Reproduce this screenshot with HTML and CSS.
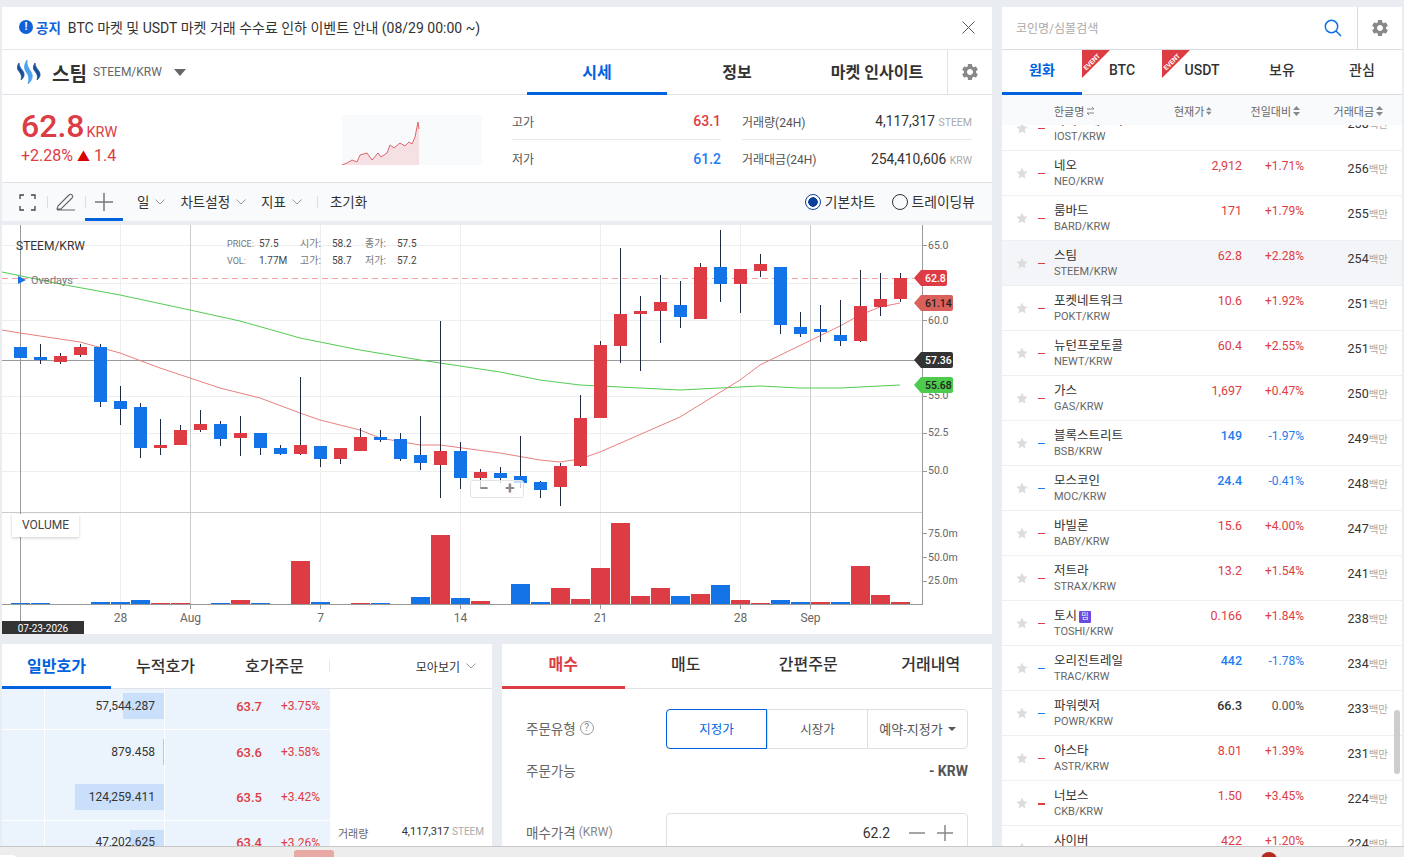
FILE: index.html
```html
<!DOCTYPE html>
<html lang="ko">
  <head>
    <meta charset="UTF-8" />
    <title>스팀 STEEM/KRW</title>
    <link rel="stylesheet" href="styles.css">
  </head>
  <body>
    <svg class="defs" width="0" height="0">
      <symbol id="gear" viewBox="0 0 24 24"><path d="M19.14 12.94c.04-.3.06-.61.06-.94 0-.32-.02-.64-.07-.94l2.03-1.58a.49.49 0 0 0 .12-.61l-1.92-3.32a.488.488 0 0 0-.59-.22l-2.39.96c-.5-.38-1.03-.7-1.62-.94l-.36-2.54a.484.484 0 0 0-.48-.41h-3.84c-.24 0-.43.17-.47.41l-.36 2.54c-.59.24-1.13.57-1.62.94l-2.39-.96c-.22-.08-.47 0-.59.22L2.74 8.87c-.12.21-.08.47.12.61l2.03 1.58c-.05.3-.09.63-.09.94s.02.64.07.94l-2.03 1.58a.49.49 0 0 0-.12.61l1.92 3.32c.12.22.37.29.59.22l2.39-.96c.5.38 1.03.7 1.62.94l.36 2.54c.05.24.24.41.48.41h3.84c.24 0 .44-.17.47-.41l.36-2.54c.59-.24 1.13-.56 1.62-.94l2.39.96c.22.08.47 0 .59-.22l1.92-3.32c.12-.22.07-.47-.12-.61l-2.01-1.58zM12 15.6c-1.98 0-3.6-1.62-3.6-3.6s1.62-3.6 3.6-3.6 3.6 1.62 3.6 3.6-1.62 3.6-3.6 3.6z"/></symbol>
      <symbol id="star" viewBox="0 0 12 12"><path d="M6 .5l1.7 3.7 4 .5-3 2.7.8 4L6 9.4l-3.500 2 .8-4-3-2.700 4-.5z"/></symbol>
      <symbol id="chev" viewBox="0 0 10 6"><path d="M.5.5L5 5 9.500.5" fill="none" stroke="#999"/></symbol>
      <symbol id="sort" viewBox="0 0 7 10"><path d="M3.500 0L7 4H0zM0 6h7l-3.500 4z"/></symbol>
      <symbol id="event" viewBox="0 0 28 28"><path d="M0 0h28L0 28z" fill="#dd3c44"/><text x="10" y="14" transform="rotate(-45 10 12)" fill="#fff" font-size="6.500" font-weight="700" text-anchor="middle">EVENT</text></symbol>
    </svg>

    <div class="layout">
      <!-- 왼쪽 영역 -->
      <main class="main">
        <section class="panel">
          <div class="notice">
            <span class="notice-icon">!</span>
            <strong>공지</strong>
            <span class="notice-text">BTC 마켓 및 USDT 마켓 거래 수수료 인하 이벤트 안내 (08/29 00:00 ~)</span>
            <svg class="notice-close" width="13" height="13" viewBox="0 0 13 13"><path d="M.5.5l12 12M12.500.5l-12 12" stroke="#555" fill="none"/></svg>
          </div>

          <div class="coin-head">
            <svg class="coin-logo" width="24" height="24" viewBox="0 0 24 24">
              <path fill="#1a5099" stroke="#1a5099" stroke-width=".8" d="M2 3C-.5 7 0 9 2.500 12 4.500 14.500 5 17 4 20c3.500-3 4-6 1.500-9.500C3.500 8 2 6 2 3z"/>
              <path fill="#4ba2f2" stroke="#4ba2f2" stroke-width=".8" d="M10 0C6.500 6 7 9 10 13c2 3 2.500 7 1 11 4.500-4 5.500-8.500 2.500-13C11 7.500 9.500 4.500 10 0z"/>
              <path fill="#1a5099" stroke="#1a5099" stroke-width=".8" d="M18 3c-2.500 4-2 6 .5 9 2 2.500 2.500 5 1.500 8 3.500-3 4-6 1.500-9.500C19.500 8 18 6 18 3z"/>
            </svg>
            <strong class="coin-title">스팀</strong>
            <span class="coin-pair">STEEM/KRW</span>
            <span class="caret"></span>
            <nav class="head-tabs">
              <a class="head-tab active">시세</a>
              <a class="head-tab">정보</a>
              <a class="head-tab">마켓 인사이트</a>
            </nav>
            <div class="head-gear"><svg width="20" height="20"><use href="#gear"/></svg></div>
          </div>

          <div class="summary">
            <div class="summary-price">
              <div class="price-now">62.8<small>KRW</small></div>
              <div class="price-diff">+2.28% <i class="up-arrow">▲</i> 1.4</div>
            </div>
            <svg class="spark" width="140" height="50" viewBox="342 115 140 50">
              <path fill="#f5e1e3" d="M342 165l5-2 5-3 5 2 3-7 7-2 5 7 6-7 3 4 6-4 3-8 4 3 6-5 5 3 4-4 3 2 3-7 3-15 1 7v36z"/>
              <path fill="none" stroke="#e0636b" d="M342 165l5-2 5-3 5 2 3-7 7-2 5 7 6-7 3 4 6-4 3-8 4 3 6-5 5 3 4-4 3 2 3-7 3-15 1 7"/>
            </svg>
            <div class="stats">
              <div class="stat"><span>고가</span><b class="up">63.1</b></div>
              <div class="stat"><span>거래량(24H)</span><em>4,117,317 <small>STEEM</small></em></div>
              <div class="stat"><span>저가</span><b class="down">61.2</b></div>
              <div class="stat"><span>거래대금(24H)</span><em>254,410,606 <small>KRW</small></em></div>
            </div>
          </div>

          <div class="toolbar">
            <button class="tool">
              <svg width="17" height="17" viewBox="0 0 17 17"><path d="M1 5V1h4M12 1h4v4M16 12v4h-4M5 16H1v-4" fill="none" stroke="#444" stroke-width="1.300"/></svg>
            </button>
            <button class="tool">
              <svg width="20" height="18" viewBox="0 0 20 18"><path d="M2 13L13 2c1-1 2-1 3 0s1 2 0 3L5 16H1zM1 17h18" fill="none" stroke="#666" stroke-width="1.100"/></svg>
            </button>
            <button class="tool active">
              <svg width="18" height="18" viewBox="0 0 18 18"><path d="M9 0v18M0 9h18" stroke="#777" stroke-width="1.500"/></svg>
            </button>
            <button class="menu first">일<svg width="10" height="6"><use href="#chev"/></svg></button>
            <button class="menu">차트설정<svg width="10" height="6"><use href="#chev"/></svg></button>
            <button class="menu">지표<svg width="10" height="6"><use href="#chev"/></svg></button>
            <span class="tool-sep"></span>
            <button class="menu">초기화</button>
            <label class="radio on"><i></i>기본차트</label>
            <label class="radio"><i></i>트레이딩뷰</label>
          </div>
        </section>

        <!-- 차트 -->
        <section class="panel chart-panel">
          <svg class="chart" width="990" height="409" viewBox="2 225 990 409">
            <path class="grid" d="M2 245.500h920M2 283.500h920M2 320.500h920M2 396.500h920M2 433.500h920M2 471.500h920M120.500 225v379M320.500 225v379M460.500 225v379M600.500 225v379M740.500 225v379"/>
            <path class="grid-dark" d="M190.500 225v379M810.500 225v379M2 512.500h920"/>
            <path class="axis" d="M922.500 225v380M2 604.500h921M922 245.500h5M922 320.500h5M922 396.500h5M922 433.500h5M922 471.500h5M922 533.500h5M922 557.500h5M922 581.500h5M120.500 604v5M190.500 604v5M320.500 604v5M460.500 604v5M600.500 604v5M740.500 604v5M810.500 604v5"/>
            <path class="cross" d="M20.500 225v396M2 360.500h920"/>
            <path class="last-line" d="M2 278.500h912"/>

            <path class="ma-green" d="M2 272L60 284 120 295 190 310 240 321 300 338 360 350 420 360 500 372 540 380 580 385 680 390 760 386 800 388 840 388 900 385"/>
            <path class="ma-red" d="M2 330L20 333 80 342 120 353 160 368 220 388 260 398 300 413 320 420 360 430 380 438 420 445 440 445 500 453 540 460 560 462 580 459 600 452 680 417 740 380 760 365 840 326 860 315 880 307 900 303"/>

            <path class="wick" d="M40.500 344v20M60.500 353v11M80.500 344v13M100.500 344v63M120.500 386v39M140.500 403v55M160.500 419v36M180.500 425v20M200.500 410v22M220.500 421v25M240.500 416v40M260.500 433v22M280.500 445v10M300.500 377v78M320.500 446v21M340.500 448v16M360.500 428v23M380.500 430v12M400.500 433v28M420.500 416v54M440.500 321v177M460.500 442v47M480.500 469v19M500.500 467v16M520.500 436v52M540.500 481v17M560.500 463v43M580.500 395v72M600.500 341v77M620.500 248v115M640.500 296v75M660.500 275v68M680.500 281v47M700.500 263v56M720.500 230v72M740.500 269v44M760.500 254v23M780.500 267v67M800.500 312v25M820.500 305v37M840.500 300v46M860.500 270v72M880.500 273v43M900.500 273v29"/>

            <g class="candle-blue">
              <rect x="14" y="347" width="13" height="11"/><rect x="34" y="357" width="13" height="3"/><rect x="94" y="347" width="13" height="55"/><rect x="114" y="401" width="13" height="8"/><rect x="134" y="407" width="13" height="41"/><rect x="214" y="424" width="13" height="15"/><rect x="254" y="433" width="13" height="15"/><rect x="274" y="448" width="13" height="6"/><rect x="314" y="446" width="13" height="13"/><rect x="374" y="437" width="13" height="3"/><rect x="394" y="439" width="13" height="20"/><rect x="414" y="455" width="13" height="8"/><rect x="454" y="451" width="13" height="27"/><rect x="494" y="473" width="13" height="5"/><rect x="514" y="476" width="13" height="7"/><rect x="534" y="482" width="13" height="8"/><rect x="674" y="305" width="13" height="12"/><rect x="714" y="267" width="13" height="17"/><rect x="774" y="267" width="13" height="58"/><rect x="794" y="327" width="13" height="7"/><rect x="814" y="329" width="13" height="3"/><rect x="834" y="335" width="13" height="6"/>
            </g>
            <g class="candle-red">
              <rect x="54" y="356" width="13" height="6"/><rect x="74" y="347" width="13" height="8"/><rect x="154" y="445" width="13" height="3"/><rect x="174" y="430" width="13" height="15"/><rect x="194" y="424" width="13" height="6"/><rect x="234" y="433" width="13" height="5"/><rect x="294" y="445" width="13" height="9"/><rect x="334" y="448" width="13" height="11"/><rect x="354" y="437" width="13" height="14"/><rect x="434" y="451" width="13" height="14"/><rect x="474" y="472" width="13" height="6"/><rect x="554" y="466" width="13" height="21"/><rect x="574" y="418" width="13" height="48"/><rect x="594" y="345" width="13" height="73"/><rect x="614" y="314" width="13" height="32"/><rect x="634" y="311" width="13" height="3"/><rect x="654" y="302" width="13" height="9"/><rect x="694" y="267" width="13" height="52"/><rect x="734" y="269" width="13" height="15"/><rect x="754" y="264" width="13" height="7"/><rect x="854" y="306" width="13" height="35"/><rect x="874" y="299" width="13" height="8"/><rect x="894" y="278" width="13" height="21"/>
            </g>

            <!-- 거래량 -->
            <g class="candle-blue">
              <rect x="11" y="603" width="19" height="1"/><rect x="31" y="603" width="19" height="1"/><rect x="91" y="602" width="19" height="2"/><rect x="111" y="602" width="19" height="2"/><rect x="131" y="600" width="19" height="4"/><rect x="211" y="603" width="19" height="1"/><rect x="251" y="603" width="19" height="1"/><rect x="311" y="602" width="19" height="2"/><rect x="371" y="603" width="19" height="1"/><rect x="411" y="597" width="19" height="7"/><rect x="451" y="598" width="19" height="6"/><rect x="511" y="584" width="19" height="20"/><rect x="531" y="602" width="19" height="2"/><rect x="671" y="596" width="19" height="8"/><rect x="711" y="585" width="19" height="19"/><rect x="771" y="600" width="19" height="4"/><rect x="791" y="602" width="19" height="2"/><rect x="831" y="602" width="19" height="2"/>
            </g>
            <g class="candle-red">
              <rect x="151" y="603" width="19" height="1"/><rect x="171" y="603" width="19" height="1"/><rect x="231" y="600" width="19" height="4"/><rect x="291" y="561" width="19" height="43"/><rect x="351" y="603" width="19" height="1"/><rect x="431" y="535" width="19" height="69"/><rect x="471" y="601" width="19" height="3"/><rect x="551" y="588" width="19" height="16"/><rect x="571" y="599" width="19" height="5"/><rect x="591" y="568" width="19" height="36"/><rect x="611" y="523" width="19" height="81"/><rect x="631" y="596" width="19" height="8"/><rect x="651" y="588" width="19" height="16"/><rect x="691" y="594" width="19" height="10"/><rect x="731" y="600" width="19" height="4"/><rect x="751" y="603" width="19" height="1"/><rect x="811" y="602" width="19" height="2"/><rect x="851" y="566" width="19" height="38"/><rect x="871" y="595" width="19" height="9"/><rect x="891" y="602" width="19" height="2"/>
            </g>

            <text class="t-pair" x="16" y="250">STEEM/KRW</text>
            <g class="t-label">
              <text x="227" y="247">PRICE:</text><text x="227" y="264">VOL:</text>
              <text class="hangul" x="300" y="247">시가:</text><text class="hangul" x="300" y="264">고가:</text>
              <text class="hangul" x="365" y="247">종가:</text><text class="hangul" x="365" y="264">저가:</text>
            </g>
            <g class="t-value">
              <text x="259" y="247">57.5</text><text x="259" y="264">1.77M</text>
              <text x="332" y="247">58.2</text><text x="332" y="264">58.7</text>
              <text x="397" y="247">57.5</text><text x="397" y="264">57.2</text>
            </g>
            <path fill="#1473e6" d="M18 276l8 4-8 4z"/>
            <text class="t-over" x="31" y="284">Overlays</text>

            <g class="t-axis">
              <text x="928" y="249">65.0</text><text x="928" y="324">60.0</text><text x="928" y="399">55.0</text><text x="928" y="436">52.5</text><text x="928" y="474">50.0</text>
              <text x="928" y="537">75.0m</text><text x="928" y="561">50.0m</text><text x="928" y="584">25.0m</text>
            </g>
            <g class="t-date">
              <text x="120.500" y="622">28</text><text x="190.500" y="622">Aug</text><text x="320.500" y="622">7</text><text x="460.500" y="622">14</text><text x="600.500" y="622">21</text><text x="740.500" y="622">28</text><text x="810.500" y="622">Sep</text>
            </g>

            <path fill="#dd3c44" d="M914 278l7-8h24a2 2 0 0 1 2 2v12a2 2 0 0 1-2 2h-24z"/>
            <path fill="#d9605b" d="M914 303l7-8h30a2 2 0 0 1 2 2v12a2 2 0 0 1-2 2h-30z"/>
            <path fill="#333" d="M914 360l7-8h30a2 2 0 0 1 2 2v12a2 2 0 0 1-2 2h-30z"/>
            <path fill="#4ccb4c" d="M914 385l7-8h30a2 2 0 0 1 2 2v12a2 2 0 0 1-2 2h-30z"/>
            <g class="t-tag">
              <text x="925" y="282" fill="#fff">62.8</text><text x="925" y="307" fill="#222">61.14</text><text x="925" y="364" fill="#fff">57.36</text><text x="925" y="389" fill="#222">55.68</text>
            </g>

            <rect x="2" y="621" width="82" height="13" fill="#333"/>
            <text class="t-badge" x="43" y="632">07-23-2026</text>
          </svg>

          <div class="vol-label">VOLUME</div>
          <div class="zoom-box"><span>−</span><span>+</span></div>
        </section>

        <div class="bottom">
          <!-- 호가 -->
          <section class="panel book">
            <div class="book-tabs">
              <a class="book-tab active">일반호가</a>
              <a class="book-tab">누적호가</a>
              <a class="book-tab">호가주문</a>
              <span class="book-group">모아보기<svg width="10" height="6"><use href="#chev"/></svg></span>
            </div>
            <div class="book-body">
              <div class="book-rows">
                <div class="book-row">
                  <div class="cell"></div>
                  <div class="cell qty"><i style="width:41px"></i><span>57,544.287</span></div>
                  <div class="cell quote"><b>63.7</b><span>+3.75%</span></div>
                </div>
                <div class="book-row no-line">
                  <div class="cell"></div>
                  <div class="cell qty"><i class="tiny" style="width:1px"></i><span>879.458</span></div>
                  <div class="cell quote"><b>63.6</b><span>+3.58%</span></div>
                </div>
                <div class="book-row">
                  <div class="cell"></div>
                  <div class="cell qty"><i style="width:89px"></i><span>124,259.411</span></div>
                  <div class="cell quote"><b>63.5</b><span>+3.42%</span></div>
                </div>
                <div class="book-row">
                  <div class="cell"></div>
                  <div class="cell qty"><i style="width:34px"></i><span>47,202.625</span></div>
                  <div class="cell quote"><b>63.4</b><span>+3.26%</span></div>
                </div>
              </div>
              <div class="book-side">
                <span>거래량</span>
                <em>4,117,317 <small>STEEM</small></em>
              </div>
            </div>
          </section>

          <!-- 주문 -->
          <section class="panel order">
            <div class="order-tabs">
              <a class="order-tab active">매수</a>
              <a class="order-tab">매도</a>
              <a class="order-tab">간편주문</a>
              <a class="order-tab">거래내역</a>
            </div>
            <div class="order-form">
              <div class="form-row">
                <span class="form-label">주문유형<i class="help">?</i></span>
                <div class="segment">
                  <a class="seg active">지정가</a>
                  <a class="seg">시장가</a>
                  <a class="seg seg-drop">예약-지정가<i></i></a>
                </div>
              </div>
              <div class="form-row can-order">
                <span class="form-label">주문가능</span>
                <b>- KRW</b>
              </div>
              <div class="form-row price-row">
                <span class="form-label">매수가격 <small>(KRW)</small></span>
                <div class="price-input">
                  <span>62.2</span>
                  <svg width="16" height="16" viewBox="0 0 16 16"><path d="M0 8h16" stroke="#888" stroke-width="1.500"/></svg>
                  <svg width="16" height="16" viewBox="0 0 16 16"><path d="M0 8h16M8 0v16" stroke="#888" stroke-width="1.500"/></svg>
                </div>
              </div>
            </div>
          </section>
        </div>
      </main>

      <!-- 오른쪽 코인 목록 -->
      <aside class="panel market">
        <div class="search">
          <span class="search-text">코인명/심볼검색</span>
          <svg class="search-icon" width="18" height="18" viewBox="0 0 18 18"><circle cx="7.500" cy="7.500" r="6.200" fill="none" stroke="#0f6fe0" stroke-width="1.500"/><path d="M12 12l5 5" stroke="#0f6fe0" stroke-width="1.500"/></svg>
          <div class="search-gear"><svg width="20" height="20"><use href="#gear"/></svg></div>
        </div>
        <div class="market-tabs">
          <a class="market-tab active">원화</a>
          <a class="market-tab"><svg class="event" width="28" height="28"><use href="#event"/></svg>BTC</a>
          <a class="market-tab"><svg class="event" width="28" height="28"><use href="#event"/></svg>USDT</a>
          <a class="market-tab">보유</a>
          <a class="market-tab">관심</a>
        </div>
        <div class="coin-cols">
          <span class="col-name">한글명<svg width="9" height="10" viewBox="0 0 9 10"><path d="M1 3h7L6 1M8 7H1l2 2" fill="none" stroke="#888"/></svg></span>
          <span class="col-price">현재가<svg width="7" height="10"><use href="#sort"/></svg></span>
          <span class="col-rate">전일대비<svg width="7" height="10"><use href="#sort"/></svg></span>
          <span class="col-vol">거래대금<svg width="7" height="10"><use href="#sort"/></svg></span>
        </div>
        <div class="coin-list">
          <ul>
            <li class="coin"><svg class="star"><use href="#star"/></svg><i class="trend up-bg"></i><div class="name"><b>아이오에스티</b><span>IOST/KRW</span></div><span class="price up">3.847</span><span class="rate up">+2.17%</span><span class="vol">258<small>백만</small></span></li>
            <li class="coin"><svg class="star"><use href="#star"/></svg><i class="trend up-bg"></i><div class="name"><b>네오</b><span>NEO/KRW</span></div><span class="price up">2,912</span><span class="rate up">+1.71%</span><span class="vol">256<small>백만</small></span></li>
            <li class="coin"><svg class="star"><use href="#star"/></svg><i class="trend up-bg"></i><div class="name"><b>룸바드</b><span>BARD/KRW</span></div><span class="price up">171</span><span class="rate up">+1.79%</span><span class="vol">255<small>백만</small></span></li>
            <li class="coin current"><svg class="star"><use href="#star"/></svg><i class="trend up-bg"></i><div class="name"><b>스팀</b><span>STEEM/KRW</span></div><span class="price up">62.8</span><span class="rate up">+2.28%</span><span class="vol">254<small>백만</small></span></li>
            <li class="coin"><svg class="star"><use href="#star"/></svg><i class="trend up-bg"></i><div class="name"><b>포켓네트워크</b><span>POKT/KRW</span></div><span class="price up">10.6</span><span class="rate up">+1.92%</span><span class="vol">251<small>백만</small></span></li>
            <li class="coin"><svg class="star"><use href="#star"/></svg><i class="trend up-bg"></i><div class="name"><b>뉴턴프로토콜</b><span>NEWT/KRW</span></div><span class="price up">60.4</span><span class="rate up">+2.55%</span><span class="vol">251<small>백만</small></span></li>
            <li class="coin"><svg class="star"><use href="#star"/></svg><i class="trend up-bg"></i><div class="name"><b>가스</b><span>GAS/KRW</span></div><span class="price up">1,697</span><span class="rate up">+0.47%</span><span class="vol">250<small>백만</small></span></li>
            <li class="coin"><svg class="star"><use href="#star"/></svg><i class="trend down-bg"></i><div class="name"><b>블록스트리트</b><span>BSB/KRW</span></div><span class="price down">149</span><span class="rate down">-1.97%</span><span class="vol">249<small>백만</small></span></li>
            <li class="coin"><svg class="star"><use href="#star"/></svg><i class="trend down-bg"></i><div class="name"><b>모스코인</b><span>MOC/KRW</span></div><span class="price down">24.4</span><span class="rate down">-0.41%</span><span class="vol">248<small>백만</small></span></li>
            <li class="coin"><svg class="star"><use href="#star"/></svg><i class="trend up-bg"></i><div class="name"><b>바빌론</b><span>BABY/KRW</span></div><span class="price up">15.6</span><span class="rate up">+4.00%</span><span class="vol">247<small>백만</small></span></li>
            <li class="coin"><svg class="star"><use href="#star"/></svg><i class="trend up-bg"></i><div class="name"><b>저트라</b><span>STRAX/KRW</span></div><span class="price up">13.2</span><span class="rate up">+1.54%</span><span class="vol">241<small>백만</small></span></li>
            <li class="coin"><svg class="star"><use href="#star"/></svg><i class="trend up-bg"></i><div class="name"><b>토시<em class="meme">밈</em></b><span>TOSHI/KRW</span></div><span class="price up">0.166</span><span class="rate up">+1.84%</span><span class="vol">238<small>백만</small></span></li>
            <li class="coin"><svg class="star"><use href="#star"/></svg><i class="trend down-bg"></i><div class="name"><b>오리진트레일</b><span>TRAC/KRW</span></div><span class="price down">442</span><span class="rate down">-1.78%</span><span class="vol">234<small>백만</small></span></li>
            <li class="coin"><svg class="star"><use href="#star"/></svg><i class="trend down-bg"></i><div class="name"><b>파워렛저</b><span>POWR/KRW</span></div><span class="price">66.3</span><span class="rate flat">0.00%</span><span class="vol">233<small>백만</small></span></li>
            <li class="coin"><svg class="star"><use href="#star"/></svg><i class="trend up-bg"></i><div class="name"><b>아스타</b><span>ASTR/KRW</span></div><span class="price up">8.01</span><span class="rate up">+1.39%</span><span class="vol">231<small>백만</small></span></li>
            <li class="coin"><svg class="star"><use href="#star"/></svg><i class="trend up-bg thick"></i><div class="name"><b>너보스</b><span>CKB/KRW</span></div><span class="price up">1.50</span><span class="rate up">+3.45%</span><span class="vol">224<small>백만</small></span></li>
            <li class="coin"><svg class="star"><use href="#star"/></svg><i class="trend up-bg"></i><div class="name"><b>사이버</b><span>CYBER/KRW</span></div><span class="price up">422</span><span class="rate up">+1.20%</span><span class="vol">224<small>백만</small></span></li>
          </ul>
          <div class="scroll-thumb"></div>
        </div>
      </aside>
    </div>

    <!-- 하단 브라우저 바 -->
    <div class="dock">
      <span class="dock-tab"></span>
      <span class="dock-pink"></span>
      <span class="dock-dot"></span>
    </div>
  </body>
</html>
```

FILE: styles.css
```css
* {
  box-sizing: border-box;
}

html,
body {
  margin: 0;
  height: 857px;
  overflow: hidden;
}

body {
  position: relative;
  background: #e9ecf1;
  color: #333;
  font-family: Roboto, "Noto Sans CJK KR", sans-serif;
  font-size: 13px;
}

button {
  font: inherit;
  color: inherit;
  background: none;
  border: none;
  padding: 0;
}

ul {
  list-style: none;
  margin: 0;
  padding: 0;
}

em,
i {
  font-style: normal;
}

.defs {
  position: absolute;
}

.up {
  color: #dd3c44;
}

.down {
  color: #1e7df0;
}

.panel {
  background: #fff;
}

.layout {
  display: grid;
  grid-template-columns: 990px 400px;
  column-gap: 10px;
  padding: 7px 0 0 2px;
  height: 857px;
}

.main {
  display: flex;
  flex-direction: column;
  min-width: 0;
}

/* 공지 */
.notice {
  display: flex;
  align-items: center;
  height: 43px;
  padding: 0 17px 2px;
  border-bottom: 1px solid #e6e8ec;
}

.notice-icon {
  width: 14px;
  height: 14px;
  border-radius: 50%;
  background: #0f62d9;
  color: #fff;
  font-size: 11px;
  font-weight: 700;
  line-height: 14px;
  text-align: center;
}

.notice strong {
  margin-left: 3px;
  color: #0f62d9;
  font-size: 13.5px;
}

.notice-text {
  margin-left: 7px;
  font-size: 14px;
  color: #333;
}

.notice-close {
  margin-left: auto;
}

/* 코인 헤더 */
.coin-head {
  display: flex;
  align-items: center;
  height: 45px;
  padding-left: 15px;
  border-bottom: 1px solid #dfe2e7;
}

.coin-title {
  margin-left: 11px;
  font-size: 19px;
  color: #333;
}

.coin-pair {
  margin-left: 6px;
  font-size: 12px;
  color: #666;
}

.caret {
  margin-left: 12px;
  border-left: 6.5px solid transparent;
  border-right: 6.5px solid transparent;
  border-top: 7px solid #666;
}

.head-tabs {
  display: flex;
  margin-left: auto;
  height: 100%;
}

.head-tab {
  width: 140px;
  height: 45px;
  font-size: 16px;
  font-weight: 700;
  line-height: 45px;
  text-align: center;
  border-bottom: 3px solid transparent;
}

.head-tab.active {
  color: #0062df;
  border-bottom-color: #0062df;
}

.head-gear {
  display: flex;
  align-items: center;
  justify-content: center;
  width: 45px;
  height: 100%;
  border-left: 1px solid #dfe2e7;
  fill: #888;
}

/* 시세 요약 */
.summary {
  display: flex;
  height: 88px;
  border-bottom: 1px solid #dfe2e7;
}

.summary-price {
  width: 340px;
  padding: 9px 0 0 19px;
  color: #dd3c44;
}

.price-now {
  height: 42px;
  font-size: 32px;
  font-weight: 500;
  line-height: 44px;
}

.price-now small {
  margin-left: 2px;
  font-size: 14.5px;
  font-weight: 400;
}

.price-diff {
  font-size: 16px;
  line-height: 20px;
}

.up-arrow {
  color: #d90000;
  font-size: 13px;
}

.spark {
  margin-top: 20px;
  background: #f9fafc;
}

.stats {
  display: grid;
  grid-template-columns: 209px 230px;
  grid-auto-rows: 37px;
  column-gap: 21px;
  margin: 8px 0 0 30px;
}

.stat {
  display: flex;
  align-items: center;
  justify-content: space-between;
  font-size: 12px;
  color: #555;
}

.stat:nth-child(-n+2) {
  border-bottom: 1px solid #e6e8ec;
}

.stat b {
  font-size: 14px;
  font-weight: 500;
}

.stat em {
  font-size: 13.8px;
  color: #333;
}

.stat small {
  font-size: 10.5px;
  color: #aaa;
}

.book-side small {
  font-size: 10px;
  color: #aaa;
}

/* 차트 툴바 */
.toolbar {
  display: flex;
  align-items: center;
  height: 38px;
  background: #f9fafc;
  padding-left: 5px;
  padding-right: 17px;
}

.tool {
  position: relative;
  display: flex;
  align-items: center;
  justify-content: center;
  width: 38px;
  height: 38px;
}

.tool + .tool::before {
  content: "";
  position: absolute;
  left: 0;
  top: 13px;
  height: 12px;
  border-left: 1px solid #ddd;
}

.tool:first-child {
  width: 40px;
}

.tool.active {
  border-bottom: 3px solid #0062df;
  padding-top: 3px;
}

.menu {
  display: flex;
  align-items: center;
  gap: 6px;
  margin-right: 15px;
  padding-bottom: 2px;
  font-size: 13.5px;
  color: #333;
}

.menu svg {
  margin-top: 2px;
}

.menu.first {
  margin-left: 14px;
}

.tool-sep {
  height: 12px;
  margin-right: 12px;
  border-left: 1px solid #ddd;
}

.radio {
  display: flex;
  align-items: center;
  gap: 4px;
  margin-left: 16px;
  padding-bottom: 2px;
  font-size: 13.8px;
}

.radio:nth-last-child(2) {
  margin-left: auto;
}

.radio i {
  width: 16px;
  height: 16px;
  margin-top: 2px;
  border-radius: 50%;
  border: 1.5px solid #333;
}

.radio.on i {
  border-color: #0a3f9e;
  background: radial-gradient(circle, #0a3f9e 0 4.5px, #fff 5px);
}

/* 차트 */
.chart-panel {
  position: relative;
  height: 409px;
  margin-top: 4px;
}

.chart {
  display: block;
}

.grid,
.grid-dark,
.axis,
.cross,
.last-line,
.ma-green,
.ma-red,
.wick {
  fill: none;
}

.grid {
  stroke: #eeeeee;
}

.grid-dark {
  stroke: #cccccc;
}

.axis {
  stroke: #999;
}

.cross {
  stroke: #999;
}

.last-line {
  stroke: #f2a0a4;
  stroke-dasharray: 6 4;
}

.ma-green {
  stroke: #52cc52;
}

.ma-red {
  stroke: #e8807f;
}

.wick {
  stroke: #1c2b3f;
}

.candle-blue {
  fill: #1473e6;
}

.candle-red {
  fill: #dd3c44;
}

.chart text {
  font-size: 10px;
}

.chart .t-pair {
  font-size: 12px;
  fill: #333;
}

.t-label text {
  fill: #777;
  font-size: 9px;
}

.chart .t-label .hangul {
  font-size: 10px;
}

.t-value text {
  fill: #444;
}

.chart .t-over {
  font-size: 11px;
  fill: #777;
}

.t-axis text {
  fill: #666;
  font-size: 10.5px;
}

.t-date text {
  fill: #666;
  font-size: 12px;
  text-anchor: middle;
}

.t-tag text {
  font-size: 10.5px;
  font-weight: 500;
}

.chart .t-badge {
  fill: #fff;
  font-size: 10px;
  text-anchor: middle;
}

.vol-label {
  position: absolute;
  left: 10px;
  top: 289px;
  width: 67px;
  height: 23px;
  background: #fff;
  box-shadow: 0 1px 3px rgba(0, 0, 0, 0.2);
  font-size: 12px;
  line-height: 23px;
  text-align: center;
  color: #444;
}

.zoom-box {
  position: absolute;
  left: 468px;
  top: 255px;
  display: flex;
  width: 54px;
  height: 18px;
  border: 1px solid #e3e3e3;
  border-radius: 3px;
  background: rgba(255, 255, 255, 0.75);
  color: #888;
  font-size: 17px;
  font-weight: 700;
  line-height: 15px;
}

.zoom-box span {
  flex: 1;
  text-align: center;
}

/* 하단 */
.bottom {
  display: flex;
  gap: 10px;
  margin-top: 10px;
  flex: 1;
  min-height: 0;
}

.bottom .panel {
  width: 490px;
  overflow: hidden;
}

.book-tabs {
  display: flex;
  align-items: center;
  height: 45px;
  border-bottom: 1px solid #dfe2e7;
}

.book-tab {
  width: 109px;
  height: 45px;
  font-size: 16px;
  font-weight: 500;
  line-height: 45px;
  text-align: center;
  border-bottom: 3px solid transparent;
}

.book-tab.active {
  color: #0062df;
  font-weight: 700;
  border-bottom-color: #0062df;
}

.book-group {
  display: flex;
  align-items: center;
  justify-content: flex-end;
  gap: 6px;
  flex: 1;
  height: 12px;
  padding-right: 16px;
  border-left: 1px solid #e6e8ec;
  font-size: 12px;
}

.book-body {
  display: flex;
  height: 168px;
  overflow: hidden;
}

.book-rows {
  width: 328px;
  flex: none;
}

.book-row {
  display: grid;
  grid-template-columns: 42px 119px 165px;
  column-gap: 1px;
  height: 45.5px;
  padding-bottom: 1px;
  width: 328px;
}

.book-row:first-child {
  margin-top: -5px;
}

.book-row.no-line {
  padding-bottom: 0;
}

.cell {
  position: relative;
  display: flex;
  align-items: center;
  background: #ebf3fd;
}

.qty {
  justify-content: flex-end;
  padding-right: 9px;
  padding-bottom: 1px;
  font-size: 12px;
}

.qty i {
  position: absolute;
  right: 0;
  top: 9px;
  height: 26px;
  background: #c9dffa;
}

.qty i.tiny {
  background: #b9c6d6;
}

.qty span {
  position: relative;
}

.quote {
  color: #dd3c44;
}

.quote b {
  width: 97px;
  font-size: 13px;
  font-weight: 500;
  text-align: right;
}

.quote span {
  width: 58px;
  font-size: 12px;
  text-align: right;
}

.book-side {
  display: flex;
  justify-content: space-between;
  flex: 1;
  height: 16px;
  margin-top: 136px;
  padding: 0 8px;
  font-size: 11px;
  color: #666;
}

.book-side em {
  color: #333;
  font-size: 11px;
}

.order-tabs {
  display: flex;
  height: 45px;
  border-bottom: 1px solid #dfe2e7;
}

.order-tab {
  flex: 1;
  height: 45px;
  font-size: 16px;
  font-weight: 500;
  line-height: 42px;
  text-align: center;
  border-bottom: 3px solid transparent;
}

.order-tab.active {
  color: #dd3c44;
  font-weight: 700;
  border-bottom-color: #dd3c44;
}

.order-form {
  padding: 20px 24px 0;
}

.form-row {
  display: flex;
  align-items: center;
  justify-content: space-between;
}

.form-label {
  display: flex;
  align-items: center;
  gap: 3px;
  padding-bottom: 2px;
  font-size: 13.5px;
  color: #666;
}

.form-label small {
  font-size: 12px;
  color: #888;
}

.help {
  display: inline-block;
  width: 14px;
  height: 14px;
  margin-left: 1px;
  border: 1px solid #999;
  border-radius: 50%;
  color: #888;
  font-size: 10px;
  line-height: 12px;
  text-align: center;
}

.segment {
  display: flex;
  width: 302px;
  height: 40px;
  border: 1px solid #dcdfe4;
  border-radius: 4px;
  font-size: 12.5px;
  color: #555;
}

.seg {
  display: flex;
  align-items: center;
  justify-content: center;
  width: 100px;
  padding-bottom: 1px;
  border-left: 1px solid #dcdfe4;
}

.seg.active {
  margin: -1px 0 -1px -1px;
  width: 101px;
  border: 1px solid #0062df;
  border-radius: 4px 0 0 4px;
  color: #0062df;
}

.seg-drop {
  flex: 1;
  gap: 5px;
  font-size: 13px;
}

.seg-drop i {
  border-left: 4px solid transparent;
  border-right: 4px solid transparent;
  border-top: 4px solid #555;
}

.can-order {
  margin-top: 12px;
  height: 20px;
}

.can-order b {
  font-size: 14px;
  color: #555;
}

.price-row {
  margin-top: 32px;
}

.price-input {
  display: flex;
  align-items: center;
  gap: 12px;
  width: 302px;
  height: 40px;
  padding-right: 14px;
  border: 1px solid #dcdfe4;
  border-radius: 4px;
  font-size: 14px;
}

.price-input span {
  margin-left: auto;
  margin-right: 7px;
}

/* 코인 목록 */
.market {
  display: flex;
  flex-direction: column;
  height: 850px;
}

.search {
  display: flex;
  align-items: center;
  flex: none;
  height: 43px;
  padding-left: 14px;
  border-bottom: 1px solid #d9dce1;
}

.search-text {
  flex: 1;
  padding-bottom: 2px;
  font-size: 12px;
  color: #aaa;
}

.search-icon {
  margin-right: 15px;
}

.search-gear {
  display: flex;
  align-items: center;
  justify-content: center;
  width: 45px;
  height: 100%;
  border-left: 1px solid #d9dce1;
  fill: #888;
}

.market-tabs {
  display: flex;
  flex: none;
  height: 45px;
  border-bottom: 1px solid #d9dce1;
}

.market-tab {
  position: relative;
  width: 80px;
  height: 45px;
  font-size: 14px;
  font-weight: 500;
  line-height: 40px;
  text-align: center;
  border-bottom: 3px solid transparent;
}

.market-tab.active {
  color: #0062df;
  font-weight: 700;
  border-bottom-color: #0062df;
}

.event {
  position: absolute;
  left: 0;
  top: 0;
}

.coin-cols {
  display: grid;
  grid-template-columns: 38px 120px 38px 88px 83px;
  flex: none;
  height: 30px;
  padding: 1px 0 0 14px;
  background: #f9fafc;
  font-size: 11px;
  color: #666;
}

.coin-cols span {
  display: flex;
  align-items: center;
  gap: 2px;
  white-space: nowrap;
  justify-content: flex-end;
  fill: #888;
}

.coin-cols .col-name {
  grid-column: 2;
  justify-content: flex-start;
}

.coin-list {
  position: relative;
  flex: 1;
  overflow: hidden;
}

.coin {
  display: grid;
  grid-template-columns: 22px 16px 120px 68px 62px 84px;
  align-items: start;
  height: 45px;
  padding-left: 14px;
  border-bottom: 1px solid #eef0f3;
}

.coin:first-child {
  margin-top: -19px;
}

.coin.current {
  background: #f4f5f8;
}

.star {
  width: 12px;
  height: 12px;
  margin-top: 16px;
  fill: #dcdcdc;
}

.trend {
  width: 7px;
  height: 1px;
  margin-top: 22px;
}

.trend.thick {
  height: 2px;
}

.up-bg {
  background: #dd3c44;
}

.down-bg {
  background: #1e7df0;
}

.name {
  padding-top: 6px;
}

.name b,
.name span {
  display: block;
  white-space: nowrap;
}

.name b {
  font-size: 12.5px;
  font-weight: 400;
  line-height: 17px;
}

.name span {
  font-size: 11px;
  color: #666;
  line-height: 15px;
}

.meme {
  display: inline-block;
  width: 12px;
  height: 12px;
  margin-left: 2px;
  background: #6a4be0;
  border-radius: 1px;
  color: #fff;
  font-size: 8px;
  line-height: 12px;
  text-align: center;
  vertical-align: 1px;
}

.price {
  margin-top: 7px;
  font-size: 12.5px;
  font-weight: 500;
  line-height: 16px;
  text-align: right;
}

.price.up {
  font-weight: 400;
}

.rate {
  margin-top: 7px;
  font-size: 12px;
  line-height: 16px;
  text-align: right;
}

.rate.flat {
  color: #555;
}

.vol {
  margin-top: 10px;
  font-size: 12.5px;
  line-height: 16px;
  text-align: right;
}

.vol small {
  font-size: 10.5px;
  color: #aaa;
}

.scroll-thumb {
  position: absolute;
  right: 2px;
  top: 585px;
  width: 6px;
  height: 64px;
  border-radius: 3px;
  background: #cdcdcd;
}

/* 하단 바 */
.dock {
  position: absolute;
  left: 0;
  right: 0;
  bottom: 0;
  height: 11px;
  background: #ededed;
  border-top: 1px solid #c8c8c8;
  overflow: hidden;
}

.dock-tab {
  position: absolute;
  left: -4px;
  top: 8px;
  width: 22px;
  height: 8px;
  background: #fff;
  border-radius: 6px 6px 0 0;
}

.dock-pink {
  position: absolute;
  left: 294px;
  top: 3px;
  width: 40px;
  height: 10px;
  background: #e8a9a4;
  border-radius: 3px 3px 0 0;
}

.dock-dot {
  position: absolute;
  left: 1261px;
  top: 5px;
  width: 16px;
  height: 16px;
  border-radius: 50%;
  background: #b52a1f;
}
```
